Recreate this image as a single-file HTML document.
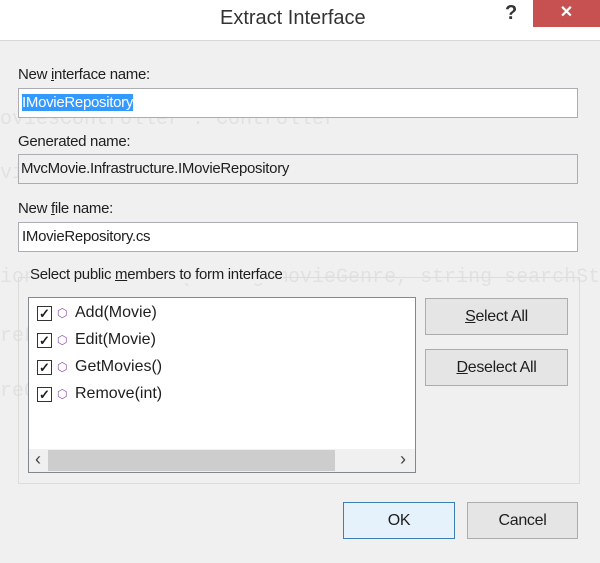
<!DOCTYPE html>
<html><head><style>
body{margin:0;width:600px;height:563px;overflow:hidden;background:#f0f0f0;font-family:"Liberation Sans",sans-serif;position:relative;color:#1e1e1e}
.a{position:absolute}
.lbl{font-size:15px;letter-spacing:-0.3px}
.inp{background:#fff;border:1px solid #abadb3;box-sizing:border-box;font-size:15px;padding:5px 3px 0;letter-spacing:-0.3px}
.btn{background:#e5e5e5;border:1px solid #acacac;box-sizing:border-box;font-size:16px;text-align:center;letter-spacing:-0.3px}
.ghost{color:rgba(0,0,0,0.06);font-family:"Liberation Mono",monospace;font-size:20px;white-space:pre}
.cb{width:13px;height:13px;border:1px solid #333;background:#fff;display:inline-block;position:absolute;left:8px;top:3px;font-size:13px;line-height:13px;text-align:center;font-weight:bold}
.it{position:absolute;left:0;font-size:16px;height:28px}
.ic{position:absolute;left:28px;top:3px;color:#8a4fb0;font-size:12px}
</style></head><body>
<div class="a" style="left:0;top:0;width:600px;height:40px;background:#fff;border-bottom:1px solid #d8d8d8"></div>
<div class="a" style="left:220px;top:7px;font-size:20px;color:#333">Extract Interface</div>
<div class="a" style="left:505px;top:2px;font-size:20px;font-weight:bold;color:#333">?</div>
<div class="a" style="left:533px;top:0;width:67px;height:27px;background:#c75050;color:#fff;text-align:center;font-size:16px;line-height:26px;font-weight:bold">✕</div>
<div class="a ghost" style="left:0;top:108px">oviesController : Controller</div>
<div class="a ghost" style="left:0;top:162px">vieDBContext db = new MovieDBContext();</div>
<div class="a ghost" style="left:0;top:266px">ionResult Index(string movieGenre, string searchStri</div>
<div class="a ghost" style="left:0;top:325px">reLst = new List&lt;string&gt;();</div>
<div class="a ghost" style="left:0;top:380px">reQry = from d in db.Movies</div>
<div class="a ghost" style="left:96px;top:410px">orderby d.Genre</div>
<div class="a ghost" style="left:96px;top:440px">select d.Genre;</div>
<div class="a lbl" style="left:18px;top:66px">New <u>i</u>nterface name:</div>
<div class="a inp" style="left:18px;top:88px;width:560px;height:30px"><span style="background:#3399ff;color:#fff">IMovieRepository</span></div>
<div class="a lbl" style="left:18px;top:133px">Generated name:</div>
<div class="a inp" style="left:18px;top:154px;width:560px;height:30px;background:#f0f0f0;padding-left:2px">MvcMovie.Infrastructure.IMovieRepository</div>
<div class="a lbl" style="left:18px;top:200px">New <u>f</u>ile name:</div>
<div class="a inp" style="left:18px;top:222px;width:560px;height:30px">IMovieRepository.cs</div>
<div class="a" style="left:18px;top:277px;width:562px;height:207px;border:1px solid #dcdcdc;box-sizing:border-box"></div>
<div class="a lbl" style="left:30px;top:266px;background:#f0f0f0">Select public <u>m</u>embers to form interface</div>
<div class="a" style="left:28px;top:297px;width:388px;height:176px;background:#fff;border:1px solid #828790;box-sizing:border-box">
 <div class="it" style="top:5px;width:300px"><span class="cb">✓</span><span class="ic">⬡</span><span style="position:absolute;left:46px;top:1px">Add(Movie)</span></div>
 <div class="it" style="top:32px;width:300px"><span class="cb">✓</span><span class="ic">⬡</span><span style="position:absolute;left:46px;top:1px">Edit(Movie)</span></div>
 <div class="it" style="top:59px;width:300px"><span class="cb">✓</span><span class="ic">⬡</span><span style="position:absolute;left:46px;top:1px">GetMovies()</span></div>
 <div class="it" style="top:86px;width:300px"><span class="cb">✓</span><span class="ic">⬡</span><span style="position:absolute;left:46px;top:1px">Remove(int)</span></div>
 <div class="a" style="left:0;top:151px;width:386px;height:23px;background:#f0f0f0"></div>
 <div class="a" style="left:19px;top:152px;width:287px;height:21px;background:#cdcdcd"></div>
 <div class="a" style="left:6px;top:151px;font-size:18px;color:#444">‹</div>
 <div class="a" style="left:371px;top:151px;font-size:18px;color:#444">›</div>
</div>
<div class="a btn" style="left:425px;top:298px;width:143px;height:37px;line-height:35px"><u>S</u>elect All</div>
<div class="a btn" style="left:425px;top:349px;width:143px;height:37px;line-height:35px"><u>D</u>eselect All</div>
<div class="a btn" style="left:343px;top:502px;width:112px;height:37px;line-height:35px;border-color:#3c7fb1;background:#e5f1fb">OK</div>
<div class="a btn" style="left:467px;top:502px;width:111px;height:37px;line-height:35px">Cancel</div>
</body></html>
